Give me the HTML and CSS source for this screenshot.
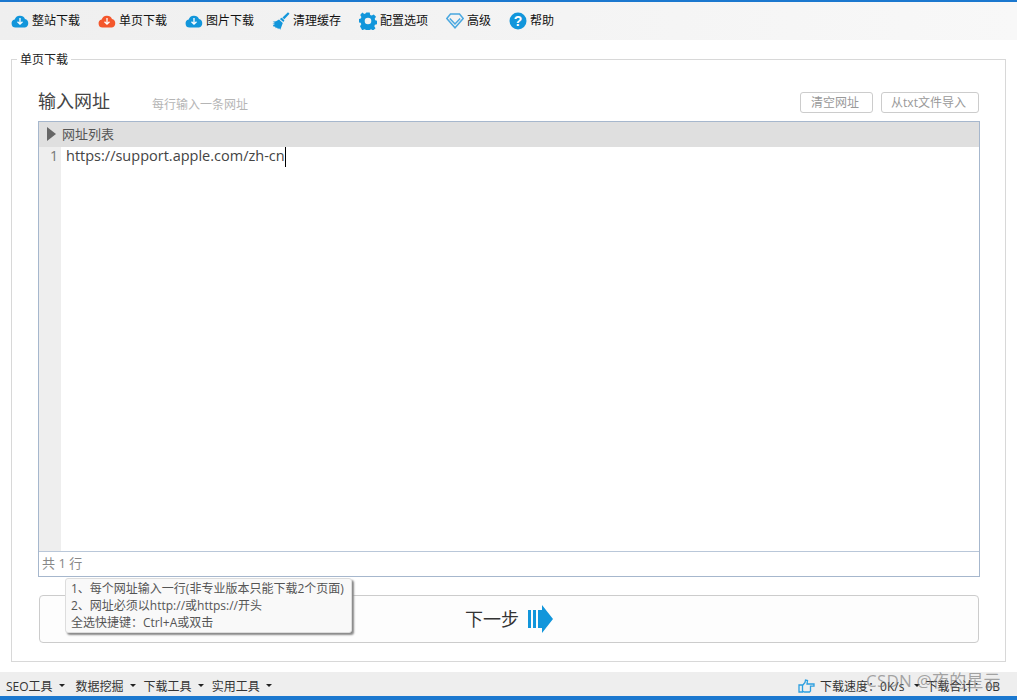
FILE: index.html
```
<!DOCTYPE html>
<html lang="zh-CN">
<head>
<meta charset="utf-8">
<title>单页下载</title>
<link rel="stylesheet" href="styles.css">
</head>
<body>
<div class="app">
  <nav class="toolbar">
    <a class="tool t1"><svg class="ico" viewBox="0 0 18 14"><path class="blue" d="M4.500 13.500a4 4 0 0 1-.8-7.900A5.500 5.500 0 0 1 14 5a4.400 4.400 0 0 1 0 8.500z"/><path class="arrow" d="M9 4v6M6.500 7.700 9 10.200l2.500-2.500"/></svg>整站下载</a>
    <a class="tool t2"><svg class="ico" viewBox="0 0 18 14"><path class="orange" d="M4.500 13.500a4 4 0 0 1-.8-7.900A5.500 5.500 0 0 1 14 5a4.400 4.400 0 0 1 0 8.500z"/><path class="arrow" d="M9 4v6M6.500 7.700 9 10.200l2.500-2.500"/></svg>单页下载</a>
    <a class="tool t3"><svg class="ico" viewBox="0 0 18 14"><path class="blue" d="M4.500 13.500a4 4 0 0 1-.8-7.900A5.500 5.500 0 0 1 14 5a4.400 4.400 0 0 1 0 8.500z"/><path class="arrow" d="M9 4v6M6.500 7.700 9 10.200l2.500-2.500"/></svg>图片下载</a>
    <a class="tool t4"><svg class="ico broom" viewBox="0 0 18 18"><path class="blue" d="M16 .3 17.500 1.800 12.300 7.300 10.500 5.600z"/><path class="blue" d="M9.800 5.800 12.400 8.300 11.400 10 7.800 6.900z"/><path class="blue" d="M7 7.600 10.800 11 8.300 17.700 6.900 16 6.200 17.200 4.900 15.400 3.900 16.200 3 14.500 1.800 14.800.9 13.300 3 12.500.3 12 3.100 11.100.6 9.800 4 9.300z"/></svg>清理缓存</a>
    <a class="tool t5"><svg class="ico gear" viewBox="0 0 18 18"><path class="blue" fill-rule="evenodd" d="M7.300.6h3.400l.5 2.300 1.500.7 2.100-1.200 2.200 2.400-1.300 2 .5 1.500 2 .5v3.400l-2.300.5-.6 1.500 1.200 2-2.400 2.300-2-1.200-1.500.6-.5 2.200H7.300l-.5-2.300-1.500-.6-2 1.200L1 14.300l1.300-2-.6-1.500-2.100-.5V7l2.200-.6.600-1.500-1.200-2L3.300.6l2 1.300 1.500-.6zM9 5.700a3.300 3.300 0 1 0 0 6.600 3.300 3.300 0 0 0 0-6.600z"/></svg>配置选项</a>
    <a class="tool t6"><svg class="ico gem" viewBox="0 0 18 16"><path class="gem-outer" d="M4.500 1h9l3.700 4.500L9 14.800.8 5.500z"/><path class="gem-inner" d="M3.800 5.500 9 11l5.200-5.500"/></svg>高级</a>
    <a class="tool t7"><svg class="ico help" viewBox="0 0 18 18"><circle class="blue" cx="9" cy="9" r="8.500"/><text class="help-q" x="9" y="14">?</text></svg>帮助</a>
  </nav>
  <main class="main">
    <fieldset class="panel">
      <legend class="legend">单页下载</legend>
      <div class="panel-body">
        <div class="head">
          <h1 class="title">输入网址</h1>
          <span class="hint">每行输入一条网址</span>
          <div class="actions">
            <button class="btn btn-clear">清空网址</button>
            <button class="btn btn-import">从txt文件导入</button>
          </div>
        </div>
        <section class="editor">
          <div class="editor-head"><span class="tri"></span>网址列表</div>
          <div class="editor-body">
            <div class="gutter">1</div>
            <div class="code"><span>https://support.apple.com/zh-cn</span><i class="caret"></i></div>
          </div>
          <div class="editor-foot">共 1 行</div>
        </section>
        <div class="next">
          <span class="next-label">下一步</span>
          <svg class="next-ico" viewBox="0 0 25 28"><path class="blue" d="M0 5h3v18H0zM5 5h3v18H5zM10 5h4V0l11 14-11 14v-5h-4z"/></svg>
        </div>
      </div>
      <div class="tip">
        <div>1、每个网址输入一行(非专业版本只能下载2个页面)</div>
        <div>2、网址必须以http://或https://开头</div>
        <div>全选快捷键：Ctrl+A或双击</div>
      </div>
    </fieldset>
  </main>
  <footer class="status">
    <div class="menus">
      <span class="menu menu-seo">SEO工具</span>
      <span class="menu">数据挖掘</span>
      <span class="menu">下载工具</span>
      <span class="menu">实用工具</span>
    </div>
    <div class="stats">
      <svg class="hand" viewBox="0 0 17 14"><path class="hand-line" d="M1 6h3.500v7H1zM4.500 6.500 7 3.500 7.500 1 9.500 1.500 9 5h7v2.200h-3.500V12l-1 1H6.500l-2-.8"/></svg>
      <span class="speed">下载速度：0K/s</span>
      <span class="drop"></span>
      <span class="total">下载合计：0B</span>
    </div>
    <span class="mark">CSDN @夜的星云</span>
  </footer>
</div>
</body>
</html>
```
FILE: styles.css
```
* { box-sizing: border-box; }
html, body { margin: 0; padding: 0; }
body {
  width: 1017px;
  height: 700px;
  overflow: hidden;
  background: #fff;
  font-family: "Open Sans", "Noto Sans CJK SC", sans-serif;
  font-size: 12px;
  color: #333;
}
.app {
  height: 700px;
  display: flex;
  flex-direction: column;
  border-top: 2px solid #1b78cf;
  border-bottom: 4px solid #1b78cf;
}
.blue { fill: #1296db; }
.orange { fill: #f4572c; }
.arrow { fill: none; stroke: #fff; stroke-width: 1.300; }

.toolbar {
  height: 38px;
  flex: none;
  display: flex;
  align-items: center;
  padding-left: 11px;
  background: linear-gradient(90deg, #efefef, #f8f8f8);
}
.tool {
  display: flex;
  align-items: center;
  color: #111;
  white-space: nowrap;
  line-height: 16px;
}
.ico { display: block; flex: none; width: 18px; height: 14px; margin-right: 3px; }
.broom, .gear, .help { height: 18px; }
.gem { height: 16px; }
.t1, .t2, .t3, .t4, .t5, .t6 { margin-right: 18px; }
.gem-outer, .gem-inner { fill: none; stroke: #4aa8e0; stroke-width: 1.500; }
.help-q { font: bold 14px "Liberation Sans", sans-serif; fill: #fff; text-anchor: middle; }

.main { flex: 1; min-height: 0; padding: 10px 11px 10px; }
.panel {
  position: relative;
  height: 100%;
  margin: 0;
  padding: 0;
  border: 1px solid #d8d8d8;
  min-width: 0;
}
.legend { padding: 1px 3px 0; margin-left: 5px; color: #222; line-height: 17px; font-size: 12px; }
.panel-body { padding: 15px 26px 18px; }

.head { height: 38px; display: flex; align-items: flex-end; padding-bottom: 6px; }
.title { margin: 0 42px 2px 0; font-size: 18px; font-weight: 400; line-height: 24px; color: #444; }
.hint { color: #b5b5b5; line-height: 16px; padding-bottom: 2px; }
.actions { margin-left: auto; display: flex; gap: 8px; padding-bottom: 2px; }
.btn {
  height: 21px;
  padding: 0 3px 0 0;
  border: 1px solid #ccc;
  border-radius: 3px;
  background: #fff;
  color: #999;
  font: inherit;
  line-height: 19px;
}
.btn-clear { width: 73px; }
.btn-import { width: 98px; }

.editor {
  margin-right: -1px;
  height: 456px;
  display: flex;
  flex-direction: column;
  border: 1px solid #a6b7cd;
}
.editor-head {
  height: 25px;
  flex: none;
  display: flex;
  align-items: center;
  padding: 0 0 2px 8px;
  background: #dfdfdf;
  color: #555;
  font-size: 13px;
}
.tri {
  width: 0;
  height: 0;
  margin-right: 6px;
  border-left: 9px solid #666;
  border-top: 7px solid transparent;
  border-bottom: 7px solid transparent;
}
.editor-body { flex: 1; min-height: 0; display: flex; }
.gutter {
  width: 22px;
  flex: none;
  background: #eee;
  color: #777;
  text-align: right;
  padding-right: 3px;
  font-size: 14px;
  line-height: 18px;
}
.code {
  display: flex;
  align-items: flex-start;
  padding-left: 5px;
  color: #444;
  font-size: 14.500px;
  line-height: 18px;
}
.caret { display: block; width: 1px; height: 20px; background: #000; }
.editor-foot {
  height: 25px;
  flex: none;
  border-top: 1px solid #b9c7d9;
  padding-left: 3px;
  color: #888;
  font-size: 13px;
  line-height: 23px;
}

.next {
  margin: 18px 0 0 1px;
  height: 48px;
  display: flex;
  align-items: center;
  justify-content: center;
  gap: 9px;
  border: 1px solid #ccc;
  border-radius: 4px;
  background: #fdfdfd;
}
.next-label { font-size: 18px; color: #333; line-height: 24px; }
.next-ico { width: 25px; height: 28px; display: block; }

.tip {
  position: absolute;
  left: 53px;
  top: 510px;
  width: 287px;
  height: 55px;
  padding: 1px 0 0 5px;
  border: 1px solid #ddd;
  border-radius: 3px;
  background: #f9f9f9;
  color: #555;
  line-height: 17px;
  white-space: nowrap;
  box-shadow: 2px 2px 2px #888;
}

.status {
  position: relative;
  height: 24px;
  flex: none;
  display: flex;
  align-items: center;
  justify-content: space-between;
  padding: 3px 0 0 6px;
  background: #eee;
  color: #333;
}
.menus { display: flex; gap: 8px; }
.menu { display: flex; align-items: center; white-space: nowrap; }
.menu-seo { margin-right: 3px; }
.menu::after {
  content: "";
  margin-left: 6px;
  border-left: 3px solid transparent;
  border-right: 3px solid transparent;
  border-top: 3px solid #222;
}
.stats { display: flex; align-items: center; padding-right: 17px; white-space: nowrap; }
.hand { width: 17px; height: 14px; margin-right: 5px; display: block; }
.hand-line { fill: none; stroke: #2c9fe0; stroke-width: 1.300; }
.drop {
  margin: 0 5px 0 10px;
  border-left: 3px solid transparent;
  border-right: 3px solid transparent;
  border-top: 3px solid #222;
}
.mark {
  position: absolute;
  left: 866px;
  top: -3px;
  font-size: 17px;
  letter-spacing: .2px;
  line-height: 24px;
  color: rgba(110, 110, 110, .6);
  white-space: nowrap;
}
```
